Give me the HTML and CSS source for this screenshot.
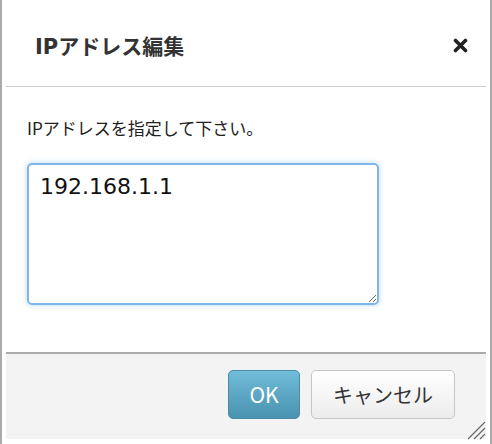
FILE: index.html
```html
<!DOCTYPE html>
<html lang="ja">
  <head>
    <meta charset="UTF-8" />
    <meta name="viewport" content="width=device-width, initial-scale=1.0" />
    <title>IPアドレス編集</title>
    <link rel="stylesheet" href="styles.css">
  </head>
  <body>
    <div class="dialog">
      <div class="dialog-header">
        <span class="dialog-title">IPアドレス編集</span>
        <button class="dialog-close" title="閉じる">
          <svg width="15" height="15" viewBox="0 0 15 15">
            <path d="M2.5 2.5 L12.5 12.5 M12.5 2.5 L2.5 12.5" stroke="#222" stroke-width="3.6" stroke-linecap="round" />
          </svg>
        </button>
      </div>
      <div class="dialog-body">
        <p class="prompt">IPアドレスを指定して下さい。</p>
        <textarea class="ip-input">192.168.1.1</textarea>
      </div>
      <div class="dialog-footer">
        <button class="btn btn-primary">OK</button>
        <button class="btn">キャンセル</button>
      </div>
      <svg class="grip" width="20" height="18" viewBox="0 0 20 18">
        <path d="M2 17 L19 0 M8 17 L19 6 M14 17 L19 12" stroke="#666" stroke-width="1.2" />
      </svg>
    </div>
  </body>
</html>
```

FILE: styles.css
```css
* {
  margin: 0;
  padding: 0;
  box-sizing: border-box;
}
body {
  background: #fff;
  font-family: "DejaVu Sans", "Noto Sans CJK JP", sans-serif;
  color: #333;
}
.dialog {
  position: relative;
  width: 492px;
  height: 444px;
  border-left: 2px solid #aaa;
  border-right: 2px solid #aaa;
  padding: 0 4px 5px;
  display: flex;
  flex-direction: column;
}
.dialog-header {
  height: 87px;
  border-bottom: 1px solid #ccc;
  display: flex;
  align-items: center;
  justify-content: space-between;
  padding: 4px 17px 0 29px;
}
.dialog-title {
  font-size: 21px;
  font-weight: bold;
  color: #333;
}
.dialog-close {
  border: none;
  background: none;
  width: 18px;
  height: 18px;
  display: flex;
  align-items: center;
  justify-content: center;
}
.dialog-body {
  flex: 1;
  padding: 29px 0 0 21px;
}
.prompt {
  font: 17px/24px "Noto Sans CJK JP", sans-serif;
  color: #222;
}
.ip-input {
  display: block;
  margin-top: 23px;
  width: 352px;
  height: 142px;
  border: 2px solid #80b4ea;
  border-radius: 5px;
  box-shadow: 0 0 5px 1px rgba(140, 190, 240, 0.45);
  padding: 8px 11px;
  font: 22px/28px "DejaVu Sans", sans-serif;
  color: #111;
  outline: none;
  resize: both;
}
.dialog-footer {
  height: 87px;
  border-top: 2px solid #aaa;
  background: #f3f3f3;
  display: flex;
  justify-content: flex-end;
  align-items: flex-start;
  gap: 11px;
  padding: 16px 31px 0 0;
}
.btn {
  height: 49px;
  padding: 0 20px;
  border: 1px solid #c6c6c6;
  border-radius: 5px;
  background: linear-gradient(#fff, #ececec);
  font: 20px/1 "Noto Sans CJK JP", sans-serif;
  color: #333;
}
.btn-primary {
  width: 72px;
  padding: 0;
  border-color: #4a8aa6;
  background: linear-gradient(#70bcd9, #4a92b0);
  font-size: 21px;
  color: #fff;
}
.btn:not(.btn-primary) {
  width: 144px;
}
.grip {
  position: absolute;
  right: 4px;
  bottom: 4px;
}
```
